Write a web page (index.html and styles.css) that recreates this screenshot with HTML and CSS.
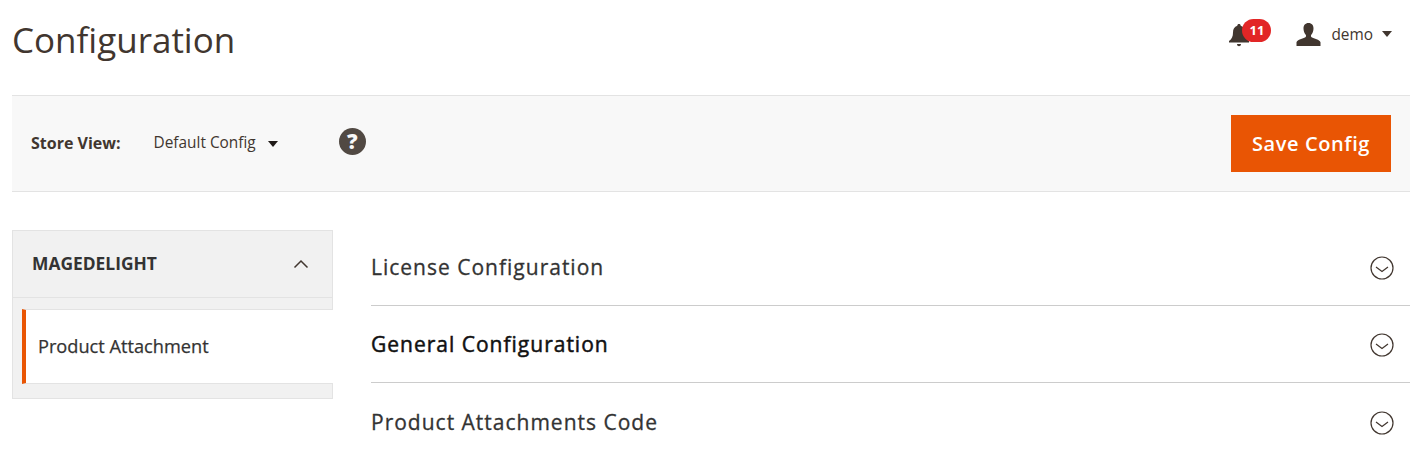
FILE: index.html
```html
<!DOCTYPE html>
<html lang="en">
<head>
    <meta charset="UTF-8">
    <meta name="viewport" content="width=device-width, initial-scale=1.0">
    <title>Configuration</title>
    <link rel="stylesheet" href="styles.css">
</head>
<body>
    <div class="page">
        <header class="page-header">
            <h1>Configuration</h1>
            <div class="header-actions">
                <div class="notifications">
                    <svg class="bell" width="22" height="24" viewBox="0 0 22 24">
                        <path d="M11 1c1 0 1.700.7 1.700 1.700 3 .8 4.300 3.300 4.300 6.800 0 4 1.200 6.500 4 8.500v1.500H1V18c2.800-2 4-4.500 4-8.500 0-3.500 1.300-6 4.300-6.800C9.300 1.700 10 1 11 1z" fill="#41362f"/>
                        <path d="M9 21h4c0 1.300-.9 2.300-2 2.300S9 22.300 9 21z" fill="#41362f"/>
                    </svg>
                    <span class="badge">11</span>
                </div>
                <div class="user">
                    <svg class="user-icon" width="25" height="23" viewBox="0 0 25 23">
                        <path d="M12.500 0c3.300 0 5 2.300 5 5.500 0 2.500-.9 5-2.200 6.300-.5.500-.5 2 .3 2.500 2.500 1.500 7.900 2.200 8.900 5V23H.5v-3.700c1-2.800 6.400-3.500 8.900-5 .8-.5.8-2 .3-2.500C8.400 10.500 7.500 8 7.500 5.500c0-3.200 1.700-5.500 5-5.500z" fill="#41362f"/>
                    </svg>
                    <span class="user-name">demo</span>
                    <span class="caret caret-small"></span>
                </div>
            </div>
        </header>

        <div class="store-bar">
            <span class="store-label">Store View:</span>
            <span class="store-value">Default Config</span>
            <span class="caret"></span>
            <span class="help">?</span>
            <button class="save-button">Save Config</button>
        </div>

        <div class="columns">
            <aside class="sidebar">
                <div class="sidebar-title">
                    <span class="sidebar-label">MAGEDELIGHT</span>
                    <svg width="16" height="10" viewBox="0 0 16 10">
                        <path d="M1.500 8.500 8 2l6.500 6.500" fill="none" stroke="#41362f" stroke-width="1.500"/>
                    </svg>
                </div>
                <div class="sidebar-item">Product Attachment</div>
            </aside>

            <main class="sections">
                <div class="section">
                    <span class="section-title">License Configuration</span>
                    <svg class="toggle" width="24" height="24" viewBox="0 0 24 24">
                        <circle cx="12" cy="12" r="11" fill="none" stroke="#41362f" stroke-width="1.200"/>
                        <path d="M6 11 12 15.500 18 11" fill="none" stroke="#41362f" stroke-width="1.200"/>
                    </svg>
                </div>
                <div class="section">
                    <span class="section-title section-title-dark">General Configuration</span>
                    <svg class="toggle" width="24" height="24" viewBox="0 0 24 24">
                        <circle cx="12" cy="12" r="11" fill="none" stroke="#41362f" stroke-width="1.200"/>
                        <path d="M6 11 12 15.500 18 11" fill="none" stroke="#41362f" stroke-width="1.200"/>
                    </svg>
                </div>
                <div class="section section-last">
                    <span class="section-title">Product Attachments Code</span>
                    <svg class="toggle" width="24" height="24" viewBox="0 0 24 24">
                        <circle cx="12" cy="12" r="11" fill="none" stroke="#41362f" stroke-width="1.200"/>
                        <path d="M6 11 12 15.500 18 11" fill="none" stroke="#41362f" stroke-width="1.200"/>
                    </svg>
                </div>
            </main>
        </div>
    </div>
</body>
</html>
```

FILE: styles.css
```css
html, body {
    margin: 0;
    padding: 0;
    background-color: #fff;
    overflow: hidden;
}
body {
    font-family: "Open Sans", Arial, sans-serif;
    color: #41362f;
}
.page {
    width: 1398px;
    margin-left: 12px;
}
.page-header {
    display: flex;
    justify-content: space-between;
    height: 95px;
}
h1 {
    margin: 17px 0 0;
    font-size: 35px;
    font-weight: 400;
    line-height: 46px;
    color: #41362f;
}
.header-actions {
    display: flex;
    align-items: flex-start;
    padding: 18px 18px 0 0;
}
.notifications {
    position: relative;
    width: 44px;
    height: 32px;
    margin-right: 24px;
    padding-top: 5px;
    box-sizing: border-box;
}
.bell {
    display: block;
}
.badge {
    position: absolute;
    top: 1px;
    left: 14px;
    width: 29px;
    height: 23px;
    border-radius: 12px;
    background-color: #e22626;
    color: #fff;
    font-size: 13px;
    font-weight: 700;
    line-height: 23px;
    text-align: center;
}
.user {
    display: flex;
    align-items: center;
    height: 32px;
}
.user-icon {
    margin-right: 10px;
}
.user-name {
    font-size: 15.4px;
    margin-right: 9px;
}
.caret {
    display: inline-block;
    width: 0;
    height: 0;
    border-left: 5px solid transparent;
    border-right: 5px solid transparent;
    border-top: 6px solid #1f1a17;
}
.caret-small {
    border-top-color: #41362f;
}
.store-bar {
    display: flex;
    align-items: center;
    box-sizing: border-box;
    height: 97px;
    padding: 0 19px;
    background-color: #f8f8f8;
    border-top: 1px solid #e3e3e3;
    border-bottom: 1px solid #e3e3e3;
}
.store-label {
    font-size: 16px;
    font-weight: 700;
    margin-right: 33px;
    margin-bottom: 2px;
}
.store-value {
    font-size: 15.4px;
    margin-right: 12px;
    margin-bottom: 2px;
}
.help {
    width: 27px;
    height: 27px;
    margin-left: 61px;
    margin-bottom: 4px;
    border-radius: 50%;
    background-color: #514943;
    color: #f8f8f8;
    font-size: 21px;
    font-weight: 800;
    line-height: 27px;
    text-align: center;
}
.save-button {
    width: 160px;
    height: 57px;
    margin-left: auto;
    border: none;
    background-color: #e95504;
    color: #fff;
    font-family: "Open Sans", Arial, sans-serif;
    font-size: 20px;
    font-weight: 600;
    letter-spacing: 0.6px;
}
.columns {
    display: flex;
    align-items: flex-start;
    padding-top: 38px;
}
.sidebar {
    width: 321px;
    box-sizing: border-box;
    margin-right: 38px;
    padding-bottom: 14px;
    background-color: #f1f1f1;
    border: 1px solid #e3e3e3;
}
.sidebar-title {
    display: flex;
    justify-content: space-between;
    align-items: center;
    height: 66px;
    padding: 0 23px 0 19px;
    border-bottom: 1px solid #e3e3e3;
    font-size: 17.4px;
    font-weight: 700;
    color: #333;
}
.sidebar-label {
    margin-bottom: 2px;
}
.sidebar-item {
    box-sizing: border-box;
    height: 75px;
    margin-top: 11px;
    margin-right: -1px;
    margin-left: 9px;
    padding-left: 12px;
    background-color: #fff;
    border-left: 4px solid #e95504;
    border-top: 1px solid #e3e3e3;
    border-bottom: 1px solid #e3e3e3;
    font-size: 18.2px;
    line-height: 73px;
    color: #333;
    -webkit-text-stroke: 0.25px #333;
}
.sections {
    flex: 1;
    margin-top: -1px;
}
.section {
    display: flex;
    justify-content: space-between;
    align-items: center;
    box-sizing: border-box;
    height: 77px;
    padding-right: 16px;
    border-bottom: 1px solid #ccc;
}
.section-last {
    border-bottom: none;
}
.section-title {
    font-size: 21px;
    letter-spacing: 1px;
    color: #333;
    -webkit-text-stroke: 0.3px #333;
}
.section-title-dark {
    color: #111;
    -webkit-text-stroke: 0.5px #111;
}
.toggle {
    flex: none;
    margin-top: 2px;
}
```
